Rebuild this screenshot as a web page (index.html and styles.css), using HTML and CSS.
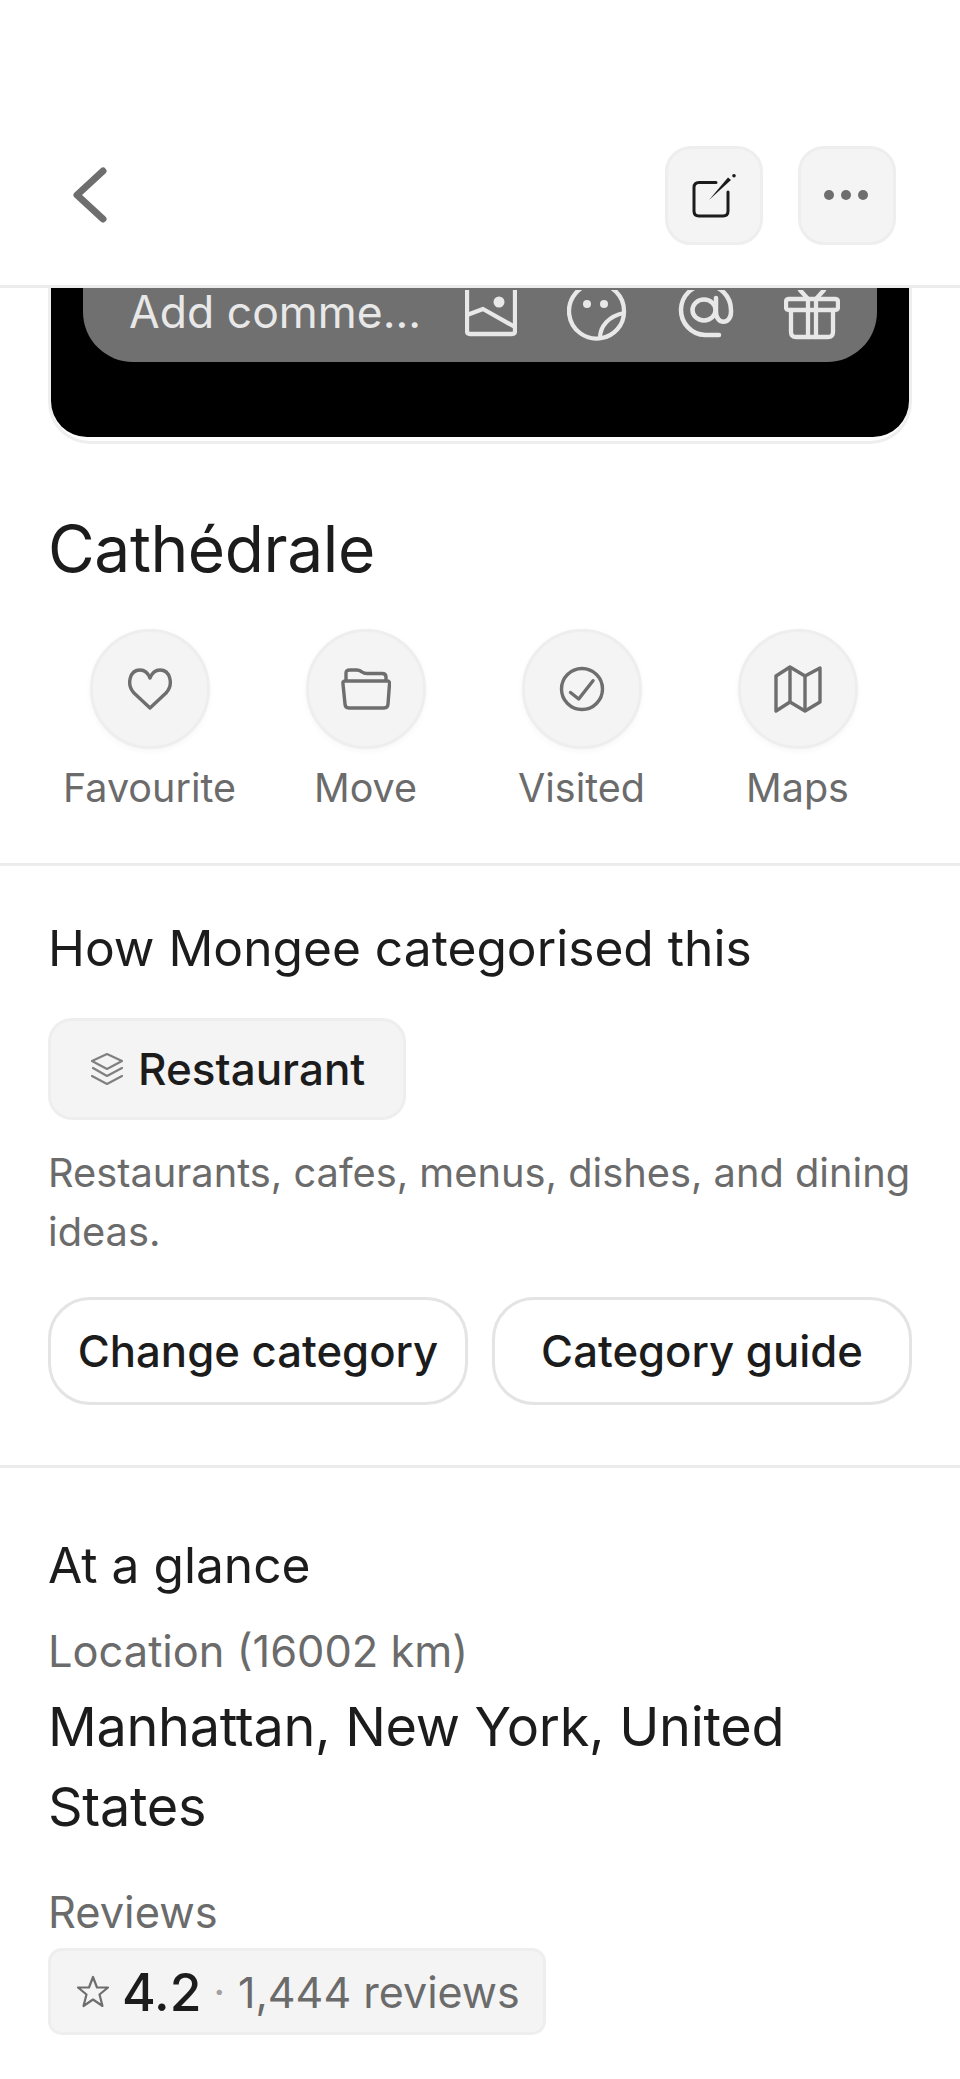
FILE: index.html
```html
<!DOCTYPE html>
<html lang="en">

<head>
    <meta charset="UTF-8">
    <meta name="viewport" content="width=device-width, initial-scale=1.0">
    <title>Cathédrale</title>
    <link rel="stylesheet" href="styles.css">
</head>

<body>
    <!-- Top bar -->
    <div class="topbar">
        <svg class="back" viewBox="0 0 36 56" fill="none" stroke="#6e6e6e" stroke-width="7" stroke-linecap="round" stroke-linejoin="round">
            <path d="M31 4 L5 28 L31 52" />
        </svg>
        <div class="topbtn">
            <svg width="44" height="44" viewBox="0 0 44 44" fill="none" stroke="#1c1c1c" stroke-width="3" stroke-linecap="round" stroke-linejoin="round">
                <path d="M24 8.500 H7 Q2 8.500 2 13.500 V37 Q2 42 7 42 H31 Q36 42 36 37 V18" />
                <path d="M17 26 L36 3.500 L39 6 Z" fill="#1c1c1c" stroke="none" />
                <circle cx="42" cy="1.800" r="1.800" fill="#1c1c1c" stroke="none" />
            </svg>
        </div>
        <div class="topbtn">
            <div class="dots"><span></span><span></span><span></span></div>
        </div>
    </div>

    <!-- Preview card, scrolled under the bar -->
    <div class="preview">
        <div class="preview-inner">
            <div class="comment">
                <span class="comment-text">Add comme...</span>
                <div class="comment-icons">
                    <svg width="52" height="50" viewBox="0 0 52 50" fill="none" stroke="#e8e8e8" stroke-width="4.300" stroke-linejoin="round">
                        <path d="M2 -6 V41 Q2 44 5 44 H47 Q50 44 50 41 V-6" />
                        <path d="M2 25 L18 19 L50 37" />
                        <circle cx="34" cy="12" r="5.500" fill="#e8e8e8" stroke="none" />
                    </svg>
                    <svg width="60" height="52" viewBox="0 0 60 52" fill="none" stroke="#e8e8e8" stroke-width="4.300" stroke-linecap="round" stroke-linejoin="round">
                        <path d="M35 48 A27.500 27.500 0 1 1 57 22 C57 36 46 46 35 48 Z" />
                        <path d="M33 48 C33 36 42 26 57 23" />
                        <circle cx="20" cy="14" r="4" fill="#e8e8e8" stroke="none" />
                        <circle cx="37" cy="14" r="4" fill="#e8e8e8" stroke="none" />
                    </svg>
                    <svg width="57" height="50" viewBox="0 0 57 50" fill="none" stroke="#e8e8e8" stroke-width="4.500" stroke-linecap="round" stroke-linejoin="round">
                        <path d="M42 45 H28 A25 25 0 1 1 54 20 V22 C54 35 39 35 39 22 V8" />
                        <ellipse cx="27" cy="20" rx="11.500" ry="10.500" />
                    </svg>
                    <svg width="56" height="50" viewBox="0 0 56 50" fill="none" stroke="#e8e8e8" stroke-width="4.300" stroke-linecap="round" stroke-linejoin="round">
                        <path d="M5 9 H51 Q54 9 54 12 V17 Q54 20 51 20 H5 Q2 20 2 17 V12 Q2 9 5 9 Z" />
                        <path d="M7 20 V42 Q7 47 12 47 H44 Q49 47 49 42 V20" />
                        <path d="M24 9 V47 M32 9 V47" />
                        <path d="M24 9 L16 0 M32 9 L40 0" />
                    </svg>
                </div>
            </div>
        </div>
    </div>

    <h1 class="title">Cathédrale</h1>

    <!-- Actions -->
    <div class="actions">
        <div class="action">
            <div class="circle">
                <svg width="46" height="42" viewBox="0 0 46 42" fill="none" stroke="#6e6e6e" stroke-width="3.400" stroke-linejoin="round">
                    <path d="M23 40 L7 25 C-1 16 3 2 13 2 C18 2 21 5 23 10 C25 5 28 2 33 2 C43 2 47 16 39 25 Z" />
                </svg>
            </div>
            <div class="action-label">Favourite</div>
        </div>
        <div class="action">
            <div class="circle">
                <svg width="50" height="42" viewBox="0 0 50 42" fill="none" stroke="#6e6e6e" stroke-width="3.400" stroke-linejoin="round">
                    <path d="M5 13 V5 Q5 2 9 2 H16 Q19 2 21 4 Q23 5.500 26 5.500 H41 Q45 5.500 45 9 V13" />
                    <path d="M4 13 H46 Q49 13 48.500 16 L47 36 Q47 40 43 40 H8 Q4 40 4 36 L2 16 Q1.500 13 4 13 Z" />
                </svg>
            </div>
            <div class="action-label">Move</div>
        </div>
        <div class="action">
            <div class="circle">
                <svg width="46" height="46" viewBox="0 0 46 46" fill="none" stroke="#6e6e6e" stroke-width="3.400" stroke-linecap="round" stroke-linejoin="round">
                    <circle cx="23" cy="23" r="20.500" />
                    <path d="M11.500 26.500 L19.700 33 L34 14.700" />
                </svg>
            </div>
            <div class="action-label">Visited</div>
        </div>
        <div class="action">
            <div class="circle">
                <svg width="48" height="48" viewBox="0 0 48 48" fill="none" stroke="#6e6e6e" stroke-width="3.400" stroke-linejoin="round">
                    <path d="M2 11 L16 2 L31 11 L46 3 V37 L31 46 L16 37 L2 46 Z" />
                    <path d="M16 2 V37 M31 11 V46" />
                </svg>
            </div>
            <div class="action-label">Maps</div>
        </div>
    </div>

    <!-- Category -->
    <div class="section category">
        <h2 class="heading">How Mongee categorised this</h2>
        <div class="chip">
            <svg width="32" height="32" viewBox="0 0 32 32" fill="none" stroke="#808080" stroke-width="2.200" stroke-linecap="round" stroke-linejoin="round">
                <path d="M16 1 L31 8 L16 16 L1 8 Z" />
                <path d="M2 15 L16 23 L31 15" />
                <path d="M1 23 L16 31 L31 23" />
            </svg>
            <span>Restaurant</span>
        </div>
        <p class="desc">Restaurants, cafes, menus, dishes, and dining ideas.</p>
        <div class="buttons">
            <div class="btn">Change category</div>
            <div class="btn">Category guide</div>
        </div>
    </div>

    <!-- At a glance -->
    <div class="section glance">
        <h2 class="heading">At a glance</h2>
        <div class="label">Location (16002 km)</div>
        <div class="place">Manhattan, New York, United States</div>
        <div class="label reviews-label">Reviews</div>
        <div class="reviews">
            <svg width="34" height="33" viewBox="0 0 34 33" fill="none" stroke="#6e6e6e" stroke-width="2.200" stroke-linejoin="round">
                <path d="M17 2 L21 12.500 L32 12.500 L23.500 19.500 L26.500 31 L17 24.500 L7.500 31 L10.500 19.500 L2 12.500 L13 12.500 Z" />
            </svg>
            <span class="score">4.2</span>
            <span class="sep">·</span>
            <span class="count">1,444 reviews</span>
        </div>
    </div>
</body>

</html>
```

FILE: styles.css
```css
* {
    box-sizing: border-box;
}

body {
    margin: 0;
    padding: 0;
    height: 2079px;
    overflow: hidden;
    background-color: white;
    font-family: Inter, "Liberation Sans", sans-serif;
    color: #1c1c1c;
}

.topbar {
    height: 288px;
    padding: 146px 64px 0 72px;
    border-bottom: 3px solid #ececec;
    display: flex;
    gap: 35px;
    align-items: flex-start;
}

.back {
    width: 36px;
    height: 56px;
    margin-top: 21px;
    margin-right: auto;
}

.topbtn {
    width: 98px;
    height: 99px;
    background-color: #f4f4f4;
    border: 3px solid #eeeeee;
    border-radius: 26px;
    display: flex;
    align-items: center;
    justify-content: center;
}

.dots {
    display: flex;
    gap: 7px;
    margin: 0 2px 2px 0;
}

.dots span {
    width: 10px;
    height: 10px;
    border-radius: 50%;
    background-color: #6e6e6e;
}

.preview {
    height: 156px;
    margin: 0 48px;
    padding-bottom: 4px;
    border: 3px solid #eeeeee;
    border-top: 0;
    border-radius: 0 0 42px 42px;
}

.preview-inner {
    height: 149px;
    background-color: black;
    border-radius: 0 0 36px 36px;
    padding-left: 32px;
}

.comment {
    width: 794px;
    height: 74px;
    background-color: #707070;
    border-radius: 0 0 50px 50px;
    display: flex;
    align-items: flex-start;
    justify-content: space-between;
    padding: 0 37px 0 46px;
    color: #e8e8e8;
    font-size: 44.5px;
}

.comment-text {
    line-height: 48px;
    white-space: nowrap;
}

.comment-icons {
    display: flex;
    align-items: flex-start;
    gap: 50px;
    margin-top: 2px;
}

.title {
    margin: 66px 0 0 48px;
    font-size: 64px;
    line-height: 78px;
    font-weight: 400;
    letter-spacing: -0.4px;
}

.actions {
    display: grid;
    grid-template-columns: repeat(4, 216px);
    padding-left: 41.5px;
    margin-top: 41px;
    height: 237px;
    border-bottom: 3px solid #ececec;
}

.action {
    display: flex;
    flex-direction: column;
    align-items: center;
}

.circle {
    width: 120px;
    height: 120px;
    border-radius: 50%;
    background-color: #f4f4f4;
    border: 3px solid #eeeeee;
    box-shadow: 0 2px 6px rgba(0, 0, 0, 0.04);
    display: flex;
    align-items: center;
    justify-content: center;
}

.action-label {
    margin-top: 15px;
    font-size: 39.5px;
    line-height: 48px;
    color: #6b6b6b;
}

.section {
    padding: 0 48px;
}

.category {
    height: 602px;
    padding-top: 52px;
    border-bottom: 3px solid #ececec;
}

.heading {
    margin: 0;
    font-size: 49.7px;
    line-height: 60px;
    font-weight: 400;
}

.chip {
    margin-top: 40px;
    width: 358px;
    height: 102px;
    background-color: #f4f4f4;
    border: 3px solid #eeeeee;
    border-radius: 24px;
    display: flex;
    align-items: center;
    padding-left: 40px;
    gap: 15px;
    font-size: 44px;
    font-weight: 500;
}

.desc {
    margin: 23px 0 0 0;
    font-size: 39.8px;
    line-height: 59px;
    color: #6b6b6b;
}

.buttons {
    margin-top: 36px;
    display: grid;
    grid-template-columns: 1fr 1fr;
    gap: 24px;
}

.btn {
    height: 108px;
    border: 3px solid #e4e4e4;
    border-radius: 42px;
    display: flex;
    align-items: center;
    justify-content: center;
    font-size: 43.7px;
    font-weight: 500;
}

.glance {
    padding-top: 67px;
}

.label {
    font-size: 43.4px;
    line-height: 48px;
    color: #6b6b6b;
    margin-top: 32px;
}

.place {
    margin-top: 12px;
    font-size: 54px;
    line-height: 80px;
    letter-spacing: -0.3px;
    width: 800px;
}

.reviews-label {
    margin-top: 41px;
}

.reviews {
    margin-top: 12px;
    width: 498px;
    height: 87px;
    background-color: #f4f4f4;
    border: 3px solid #eeeeee;
    border-radius: 14px;
    display: flex;
    align-items: center;
    padding-left: 25px;
    gap: 12px;
}

.score {
    font-size: 51.5px;
    font-weight: 500;
}

.sep {
    color: #a0a0a0;
    font-size: 40px;
}

.count {
    font-size: 43px;
    margin-left: 1px;
    color: #6b6b6b;
}
```
